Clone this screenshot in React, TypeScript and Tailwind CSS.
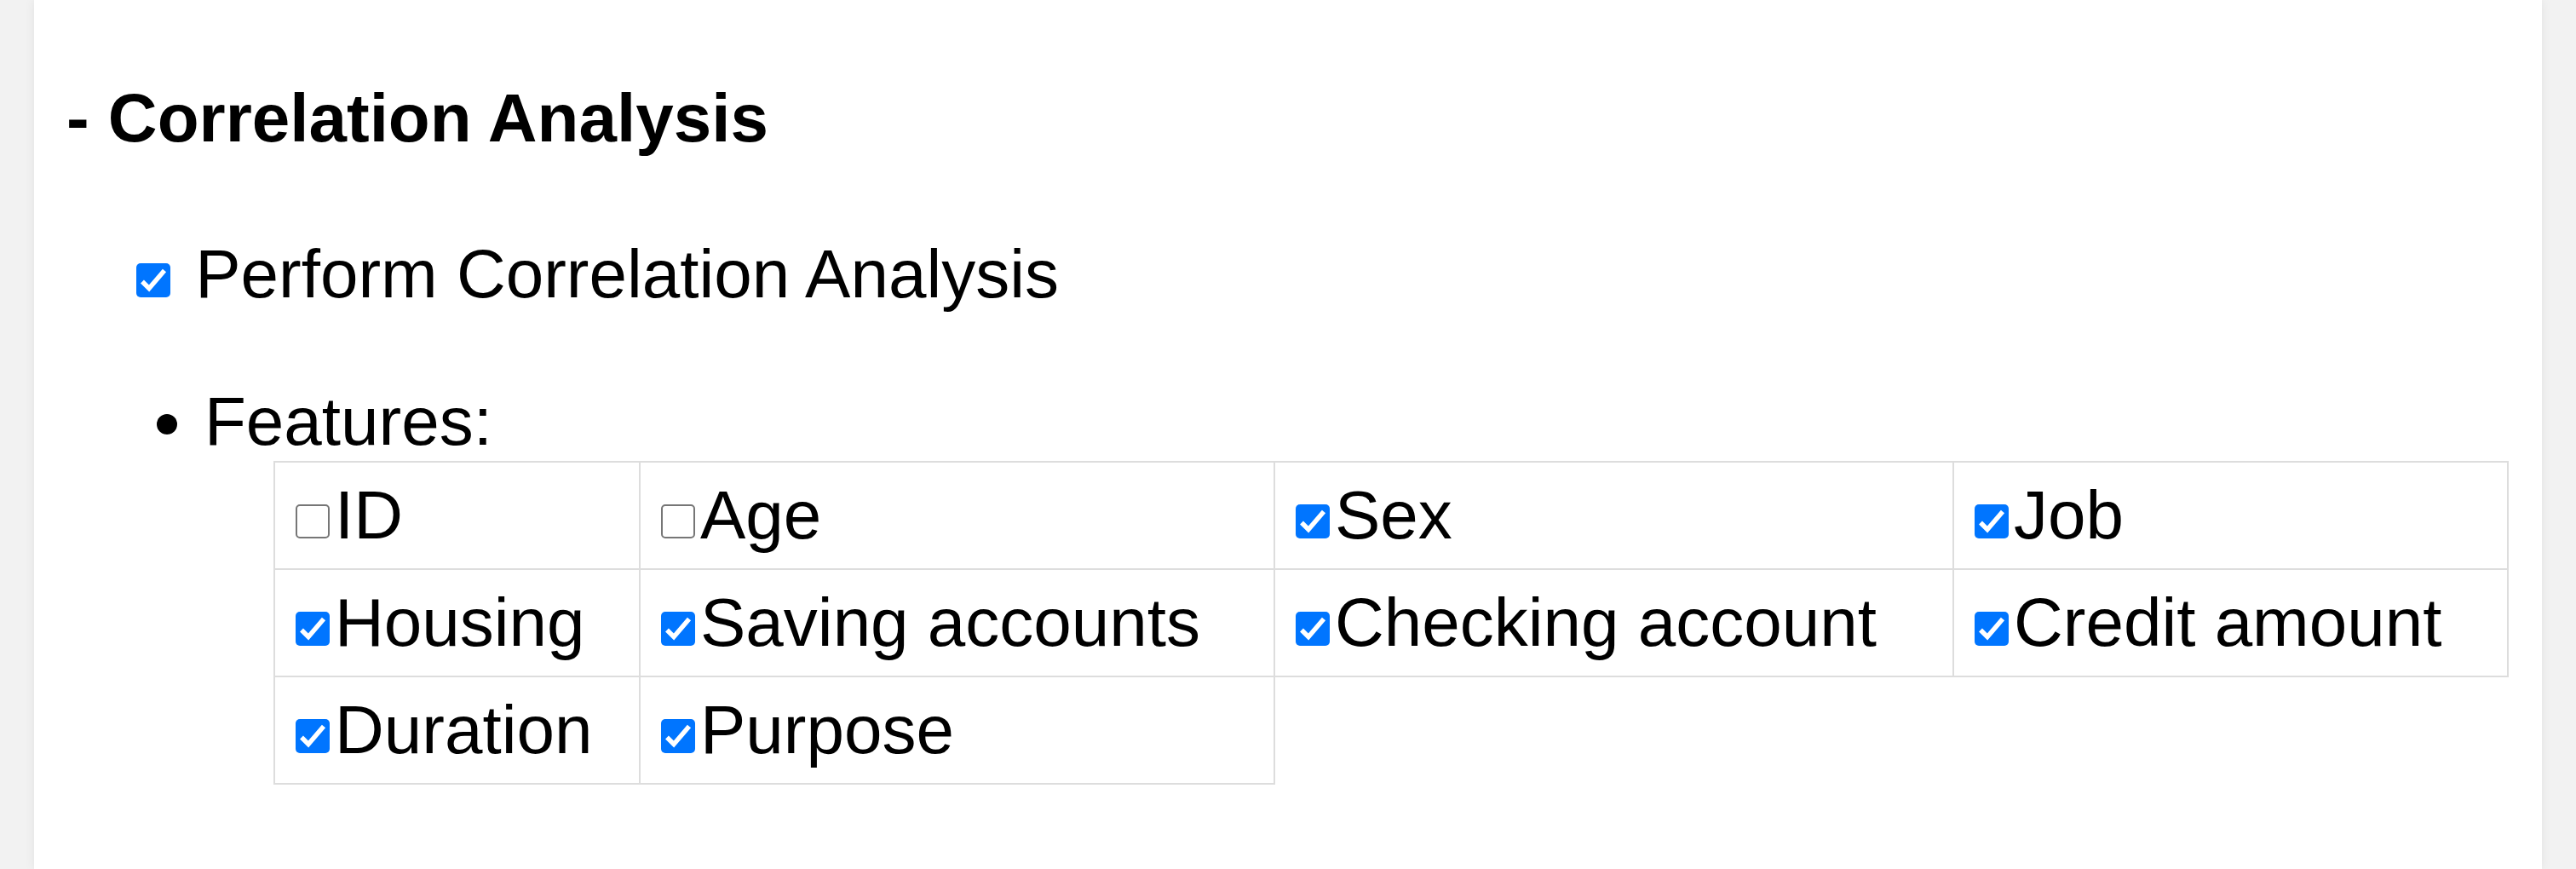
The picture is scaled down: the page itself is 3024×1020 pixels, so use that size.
import React from "react";

const Box = ({ checked }: { checked: boolean }) =>
  checked ? (
    <span className="inline-block align-baseline w-[40px] h-[40px] rounded-[5px] bg-[#0075ff]">
      <svg viewBox="0 0 40 40" className="w-[40px] h-[40px]">
        <path
          d="M7 21.5 L15 29.5 L33 8.5"
          fill="none"
          stroke="white"
          strokeWidth="5.5"
          strokeLinejoin="miter"
        />
      </svg>
    </span>
  ) : (
    <span className="inline-block align-baseline w-[40px] h-[40px] rounded-[5px] border-2 border-[#767676] bg-white" />
  );

const rows: [string, boolean][][] = [
  [
    ["ID", false],
    ["Age", false],
    ["Sex", true],
    ["Job", true],
  ],
  [
    ["Housing", true],
    ["Saving accounts", true],
    ["Checking account", true],
    ["Credit amount", true],
  ],
  [
    ["Duration", true],
    ["Purpose", true],
  ],
];

export default function App() {
  return (
    <div className="min-h-screen bg-[#f2f2f2] px-[40px]">
      <div className="min-h-screen bg-white shadow-[0_0_12px_rgba(0,0,0,0.07)] pl-[38px] pt-[93px] text-black font-['Liberation_Sans',Arial,sans-serif]">
        <h2 className="text-[80px] font-bold leading-[92px]">- Correlation Analysis</h2>

        <div className="mt-[91px] ml-[82px] text-[80px] leading-[92px]">
          <span className="inline-block mr-[7px]">
            <Box checked />
          </span>{" "}
          Perform Correlation Analysis
        </div>

        <div className="mt-[81px] ml-[106px] text-[80px] leading-[92px]">
          <span className="inline-block align-baseline w-[24px] h-[24px] mb-[12px] mr-[32px] rounded-full bg-black" />
          Features:
        </div>

        <table className="ml-[243px] w-[2622px] table-fixed border-collapse text-[80px] leading-[92px]">
          <colgroup>
            <col className="w-[429px]" />
            <col className="w-[745px]" />
            <col className="w-[797px]" />
            <col className="w-[651px]" />
          </colgroup>
          <tbody>
            {rows.map((row, i) => (
              <tr key={i} className="h-[126px]">
                {row.map(([label, on]) => (
                  <td
                    key={label}
                    className="border-2 border-[#dddddd] pl-[24px] py-0 align-middle whitespace-nowrap"
                  >
                    <span className="inline-block mr-[6px]">
                      <Box checked={on} />
                    </span>
                    {label}
                  </td>
                ))}
              </tr>
            ))}
          </tbody>
        </table>
      </div>
    </div>
  );
}
